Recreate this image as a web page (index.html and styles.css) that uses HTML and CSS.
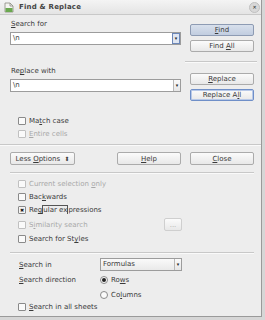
FILE: index.html
```html
<!DOCTYPE html>
<html lang="en">
<head>
    <meta charset="UTF-8">
    <title>Find &amp; Replace</title>
    <link rel="stylesheet" href="styles.css">
</head>
<body>

<div class="window">
    <div class="titlebar">
        <svg class="app-icon" width="10" height="11" viewBox="0 0 10 11">
            <path d="M1 1h5l3 3v6H1z" fill="#f4f4f0" stroke="#8a8a80" stroke-width="0.8"/>
            <rect x="1.5" y="6" width="7" height="4" fill="#6aa84f"/>
            <path d="M6 1v3h3" fill="none" stroke="#8a8a80" stroke-width="0.8"/>
        </svg>
        <span class="title">Find &amp; Replace</span>
        <span class="close-btn">&#x2715;</span>
    </div>

    <div class="content">
        <div class="top">
            <div class="fields">
                <div class="label"><u>S</u>earch for</div>
                <div class="combo focus">
                    <span class="combo-text">\n</span>
                    <span class="combo-arrow active">&#9662;</span>
                </div>
                <div class="label second">Re<u>p</u>lace with</div>
                <div class="combo">
                    <span class="combo-text">\n</span>
                    <span class="combo-arrow">&#9662;</span>
                </div>
            </div>
            <div class="actions">
                <button class="btn default"><u>F</u>ind</button>
                <button class="btn">Find <u>A</u>ll</button>
                <hr class="sep short">
                <button class="btn"><u>R</u>eplace</button>
                <button class="btn focused">Replace A<u>l</u>l</button>
            </div>
        </div>

        <div class="checks first">
            <label class="check"><span class="box"></span><span>Ma<u>t</u>ch case</span></label>
            <label class="check disabled"><span class="box"></span><span><u>E</u>ntire cells</span></label>
        </div>
    </div>

    <hr class="sep full">

    <div class="content">
        <div class="button-row">
            <button class="btn options">Less <u>O</u>ptions <span class="updown">&#x2B0D;</span></button>
            <div class="row-right">
                <button class="btn"><u>H</u>elp</button>
                <button class="btn"><u>C</u>lose</button>
            </div>
        </div>
        <hr class="sep inner">

        <div class="checks">
            <label class="check disabled"><span class="box"></span><span>Current selection <u>o</u>nly</span></label>
            <label class="check"><span class="box"></span><span>Bac<u>k</u>wards</span></label>
            <label class="check"><span class="box checked">&#x2716;</span><span>Re<u>g</u><span class="focus-mark">ular ex</span>pressions</span></label>
            <div class="similar">
                <label class="check disabled"><span class="box"></span><span>S<u>i</u>milarity search</span></label>
                <button class="btn dots" disabled>...</button>
            </div>
            <label class="check"><span class="box"></span><span>Search for St<u>y</u>les</span></label>
        </div>
        <hr class="sep lower">

        <div class="grid">
            <span class="glabel"><u>S</u>earch in</span>
            <div class="combo select">
                <span class="combo-text">Formulas</span>
                <span class="combo-arrow">&#9662;</span>
            </div>
            <span class="glabel"><u>S</u>earch direction</span>
            <label class="radio"><span class="dot on"></span><span>Ro<u>w</u>s</span></label>
            <span></span>
            <label class="radio"><span class="dot"></span><span>Co<u>l</u>umns</span></label>
        </div>
        <label class="check last"><span class="box"></span><span><u>S</u>earch in all sheets</span></label>
    </div>
</div>

</body>
</html>
```

FILE: styles.css
```css
body {
    margin: 0;
    background: #d6d6d6;
    font-family: "DejaVu Sans", sans-serif;
    font-size: 7px;
    color: #3a3a3a;
}
u {
    text-decoration: underline;
    text-underline-offset: 1px;
}
.window {
    width: 261px;
    height: 316px;
    background: #ededed;
    border-right: 1px solid #9a9a9a;
    border-bottom: 1px solid #9a9a9a;
}
.titlebar {
    height: 14px;
    display: flex;
    align-items: center;
    padding: 0 1px 0 4px;
    background: linear-gradient(#f4f4f4, #e4e4e4);
    border-bottom: 1px solid #c8c8c8;
}
.app-icon {
    margin-right: 5px;
}
.title {
    font-weight: bold;
    font-size: 7px;
    color: #444;
    letter-spacing: 0.2px;
}
.close-btn {
    margin-left: auto;
    width: 9px;
    height: 9px;
    border-radius: 50%;
    background: #d8d8d8;
    border: 1px solid #c0c0c0;
    font-size: 5px;
    line-height: 9px;
    text-align: center;
    color: #222;
    font-weight: bold;
}
.content {
    padding: 0 7px 0 10px;
}
.top {
    display: flex;
    gap: 9px;
    padding-top: 4px;
}
.fields {
    flex: 1;
}
.label {
    height: 10px;
    line-height: 10px;
    margin-bottom: 3px;
    margin-left: 1px;
}
.label.second {
    margin-top: 21px;
}
.combo {
    height: 11px;
    display: flex;
    border: 1px solid #9c9c9c;
    background: #fff;
}
.combo-text {
    flex: 1;
    padding-left: 2px;
    line-height: 11px;
}
.combo-arrow {
    width: 6px;
    border-left: 1px solid #b8b8b8;
    background: linear-gradient(#fafafa, #e6e6e6);
    font-size: 5px;
    line-height: 11px;
    text-align: center;
    color: #222;
}
.combo-arrow.active {
    border: 1px solid #6c87b8;
    background: #dfe6f2;
    line-height: 9px;
}
.actions {
    width: 64px;
    display: flex;
    flex-direction: column;
    gap: 4px;
    padding-top: 5px;
}
.actions .btn {
    height: 12px;
}
.btn {
    font-family: "DejaVu Sans", sans-serif;
    font-size: 7px;
    color: #3a3a3a;
    height: 13px;
    padding: 0 4px;
    border: 1px solid #ababab;
    border-radius: 2px;
    background: linear-gradient(#fbfbfb, #e8e8e8);
    box-sizing: border-box;
}
.btn.default {
    background: linear-gradient(#d8e0ec, #c1cde0);
    border-color: #8d9bb3;
}
.btn.focused {
    border-color: #6f8fc8;
    box-shadow: inset 0 0 0 1px #b8c9e8;
}
.sep {
    border: 0;
    border-top: 1px solid #c8c8c8;
    border-bottom: 1px solid #fafafa;
    margin: 0;
}
.sep.short {
    margin: 5px -3px 6px -5px;
}
.sep.full {
    margin: 5px 0 6px 0;
}
.sep.inner {
    margin: 7px 0 5px 0;
}
.sep.lower {
    margin: 8px 0 3px 0;
}
.checks {
    display: flex;
    flex-direction: column;
    gap: 3px;
    padding-left: 8px;
}
.checks.first {
    margin-top: 15px;
}
.check {
    display: flex;
    align-items: center;
    height: 10px;
    line-height: 10px;
}
.check.disabled {
    color: #a8a8a8;
}
.box {
    width: 6px;
    height: 6px;
    border: 1px solid #8a8a8a;
    border-radius: 1px;
    background: #fafafa;
    margin-right: 3px;
    font-size: 5px;
    line-height: 6px;
    text-align: center;
    color: #111;
}
.check.disabled .box {
    border-color: #c0c0c0;
}
.box.checked {
    background: #f4f4f4;
}
.focus-mark {
    border: 1px solid #555;
    border-bottom: 0;
    line-height: 7px;
}
.similar {
    width: 164px;
    display: flex;
    align-items: center;
    justify-content: space-between;
    height: 13px;
}
.btn.dots {
    width: 18px;
    height: 13px;
    color: #b0b0b0;
    border-color: #cfcfcf;
    padding: 0;
}
.button-row {
    display: flex;
    justify-content: space-between;
}
.button-row .btn {
    width: 64px;
}
.button-row .btn.options {
    width: 65px;
}
.updown {
    font-size: 6px;
    margin-left: 2px;
}
.row-right {
    display: flex;
    gap: 9px;
}
.grid {
    display: grid;
    grid-template-columns: 81px 82px;
    grid-auto-rows: 15px;
    align-items: center;
    padding-left: 9px;
}
.combo.select .combo-text {
    background: linear-gradient(#fafafa, #e9e9e9);
}
.radio {
    display: flex;
    align-items: center;
}
.dot {
    width: 6px;
    height: 6px;
    border: 1px solid #8a8a8a;
    border-radius: 50%;
    background: #fafafa;
    margin-right: 3px;
    position: relative;
}
.dot.on::after {
    content: "";
    position: absolute;
    left: 1px;
    top: 1px;
    width: 4px;
    height: 4px;
    border-radius: 50%;
    background: #222;
}
.check.last {
    padding-left: 8px;
    margin-top: 0;
}
```
